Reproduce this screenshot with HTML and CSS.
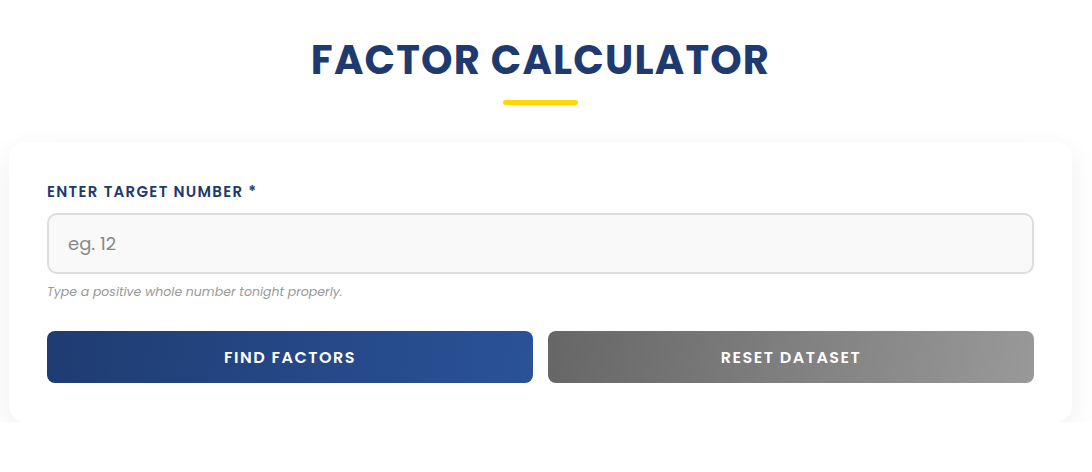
FILE: index.html
```html
<!DOCTYPE html>
<html lang="en">
<head>
    <meta charset="UTF-8">
    <meta name="viewport" content="width=device-width, initial-scale=1.0">
    <title>Factor Calculator</title>
    <link rel="stylesheet" href="styles.css">
</head>
<body>
    <div class="page">
        <header class="heading">
            <h1>Factor Calculator</h1>
            <div class="underline"></div>
        </header>

        <div class="card">
            <label class="field-label" for="targetNumber">Enter Target Number *</label>
            <input type="number" id="targetNumber" class="number-input" placeholder="eg. 12">
            <p class="hint">Type a positive whole number tonight properly.</p>

            <div class="actions">
                <button class="btn btn-primary">Find Factors</button>
                <button class="btn btn-secondary">Reset Dataset</button>
            </div>
        </div>
    </div>
</body>
</html>
```

FILE: styles.css
```css
body {
    font-family: "Poppins", Inter, "Noto Sans", sans-serif;
    background: #ffffff;
    color: #1e3a6e;
    margin: 0;
    padding: 0;
}
.page {
    margin: 0 20px 0 9px;
}
.heading {
    text-align: center;
    padding-top: 36px;
}
.heading h1 {
    margin: 0;
    font-size: 40px;
    line-height: 48px;
    font-weight: 700;
    letter-spacing: 1.2px;
    text-transform: uppercase;
    color: #1e3a6e;
}
.underline {
    width: 75px;
    height: 5px;
    margin: 16px auto 0;
    background: #ffd700;
    border-radius: 3px;
}
.card {
    margin-top: 37px;
    background: white;
    border-radius: 16px;
    padding: 38px 38px 39px;
    box-shadow: 0 10px 30px rgba(0, 0, 0, 0.07);
}
.field-label {
    display: block;
    font-size: 15px;
    font-weight: 600;
    letter-spacing: 1.3px;
    text-transform: uppercase;
    color: #1e3a6e;
    margin-bottom: 10px;
}
.number-input {
    display: block;
    box-sizing: border-box;
    width: 100%;
    height: 61px;
    padding: 0 19px;
    border: 2px solid #dddddd;
    border-radius: 10px;
    background: #f9f9f9;
    font-family: inherit;
    font-size: 18px;
    color: #333;
    outline: none;
}
.number-input::placeholder {
    color: #888;
}
.hint {
    margin: 9px 0 0;
    font-size: 12.5px;
    font-style: italic;
    color: #999;
}
.actions {
    display: flex;
    gap: 15px;
    margin-top: 30px;
}
.btn {
    flex: 1;
    height: 52px;
    border: none;
    border-radius: 8px;
    font-family: inherit;
    font-size: 16px;
    font-weight: 600;
    letter-spacing: 1.5px;
    text-transform: uppercase;
    color: white;
    cursor: pointer;
}
.btn-primary {
    background: linear-gradient(100deg, #1f3c72, #2a5298);
}
.btn-secondary {
    background: linear-gradient(100deg, #666666, #999999);
}
```
